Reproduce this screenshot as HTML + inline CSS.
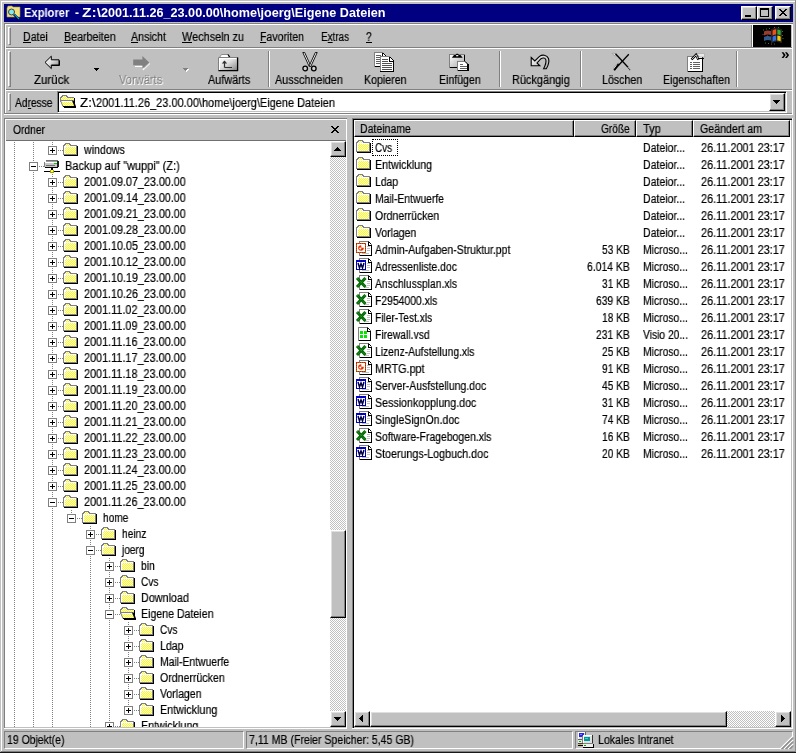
<!DOCTYPE html><html><head><meta charset="utf-8"><title>Explorer</title><style>
*{box-sizing:border-box;margin:0;padding:0}
html,body{width:796px;height:753px;overflow:hidden;background:#c0c0c0}
body{position:relative;font-family:"Liberation Sans",sans-serif;font-size:11px;color:#000;line-height:13px}
.a{position:absolute}
.t{position:absolute;white-space:nowrap;height:13px;line-height:13px;font-size:12px;transform-origin:0 0;will-change:transform;-webkit-text-stroke:0.2px currentColor}
.r{position:absolute;white-space:nowrap;height:13px;line-height:13px;text-align:right}
u{text-decoration:none;border-bottom:1px solid #000;display:inline-block;height:12px;line-height:13px}
.dis{color:#808080;text-shadow:1px 1px 0 #fff;-webkit-text-stroke:0 !important}
svg{position:absolute;overflow:visible}
.vd{position:absolute;width:1px;background:repeating-linear-gradient(to bottom,#808080 0,#808080 1px,transparent 1px,transparent 2px)}
.hd{position:absolute;height:1px;background:repeating-linear-gradient(to right,#808080 0,#808080 1px,transparent 1px,transparent 2px)}
.bx{position:absolute;width:9px;height:9px;border:1px solid #808080;background:#fff}
.bx i{position:absolute;left:1px;top:3px;width:5px;height:1px;background:#000}
.bx b{position:absolute;left:3px;top:1px;width:1px;height:5px;background:#000}
.btn{position:absolute;background:#c0c0c0;border:1px solid;border-color:#fff #000 #000 #fff;box-shadow:inset -1px -1px 0 #808080,inset 1px 1px 0 #dfdfdf}
.sb{background-color:#fff;background-image:linear-gradient(45deg,#c0c0c0 25%,transparent 25%,transparent 75%,#c0c0c0 75%),linear-gradient(45deg,#c0c0c0 25%,transparent 25%,transparent 75%,#c0c0c0 75%);background-size:2px 2px;background-position:0 0,1px 1px}
.grip{position:absolute;width:3px;border:1px solid;border-color:#fff #808080 #808080 #fff}
.hl{position:absolute;height:2px;border-top:1px solid #808080;border-bottom:1px solid #fff}
.vsep{position:absolute;width:2px;border-left:1px solid #808080;border-right:1px solid #fff}
.hdr{position:absolute;background:#c0c0c0;border:1px solid;border-color:#fff #000 #000 #fff;box-shadow:inset -1px -1px 0 #808080}
.sunk{position:absolute;border:1px solid;border-color:#808080 #fff #fff #808080}
</style></head><body>
<svg width="0" height="0" style="left:0;top:0"><defs><pattern id="dy" width="2" height="2" patternUnits="userSpaceOnUse"><rect width="2" height="2" fill="#fff"/><rect width="1" height="1" fill="#ff0"/><rect x="1" y="1" width="1" height="1" fill="#ff0"/></pattern></defs></svg>
<div class="a" style="left:0px;top:0px;width:796px;height:753px;background:#c0c0c0;"></div>
<div class="a" style="left:1px;top:1px;width:794px;height:1px;background:#fff;"></div>
<div class="a" style="left:1px;top:1px;width:1px;height:751px;background:#fff;"></div>
<div class="a" style="left:1px;top:751px;width:795px;height:1px;background:#808080;"></div>
<div class="a" style="left:795px;top:0px;width:1px;height:753px;background:#8c8c8c;"></div>
<div class="a" style="left:0px;top:752px;width:796px;height:1px;background:#181818;"></div>
<div class="a" style="left:4px;top:4px;width:789px;height:18px;background:#000080;"></div>
<div class="t" style="left:24.30px;top:7px;transform:scaleX(0.9307);color:#fff;font-weight:bold;-webkit-text-stroke:0">Explorer</div>
<div class="t" style="left:74.50px;top:7px;transform:scaleX(0.9250);color:#fff;font-weight:bold;-webkit-text-stroke:0">-</div>
<div class="t" style="left:81.50px;top:7px;transform:scaleX(1.2964);color:#fff;font-weight:bold;-webkit-text-stroke:0">Z:\</div>
<div class="t" style="left:100.60px;top:7px;transform:scaleX(1.0528);color:#fff;font-weight:bold;-webkit-text-stroke:0">2001.11.26_23.00.00\home\joerg\Eigene Dateien</div>
<svg style="left:6px;top:5px" width="16" height="16" viewBox="0 0 16 16"><path d="M1 3l1-2h4l1 1h7v10h-13z" fill="#f0e080" stroke="#a09030" stroke-width="0.600"/><circle cx="5.500" cy="7" r="3" fill="#80e8f0" stroke="#404040" stroke-width="1"/><path d="M8 9.500l5 5" stroke="#000" stroke-width="2.400"/><path d="M8.300 9.300l4.700 4.700" stroke="#00a0e0" stroke-width="1.200"/></svg>
<div class="btn" style="left:741px;top:6px;width:16px;height:14px"></div>
<div class="btn" style="left:757px;top:6px;width:16px;height:14px"></div>
<div class="btn" style="left:775px;top:6px;width:16px;height:14px"></div>
<div class="a" style="left:745px;top:15px;width:6px;height:2px;background:#000;"></div>
<div class="a" style="left:760px;top:8px;width:9px;height:9px;border:1px solid #000;border-top-width:2px"></div>
<svg style="left:779px;top:9px" width="8" height="7" viewBox="0 0 8 7" shape-rendering="crispEdges"><path d="M0 0h2v1h1v1h2v-1h1v-1h2v1h-1v1h-1v1h-1v1h1v1h1v1h1v1h-2v-1h-1v-1h-2v1h-1v1h-2v-1h1v-1h1v-1h1v-1h-1v-1h-1v-1h-1z" fill="#000"/></svg>
<div class="hl" style="left:4px;top:23px;width:789px"></div>
<div class="hl" style="left:4px;top:47px;width:789px"></div>
<div class="hl" style="left:4px;top:89px;width:789px"></div>
<div class="hl" style="left:4px;top:113px;width:789px"></div>
<div class="a" style="left:4px;top:24px;width:1px;height:90px;background:#808080;"></div>
<div class="a" style="left:5px;top:25px;width:1px;height:88px;background:#fff;"></div>
<div class="a" style="left:792px;top:24px;width:1px;height:90px;background:#fff;"></div>
<div class="grip" style="left:8px;top:27px;height:18px"></div>
<div class="grip" style="left:8px;top:51px;height:36px"></div>
<div class="grip" style="left:8px;top:93px;height:18px"></div>
<div class="t" style="left:23.40px;top:31px;transform:scaleX(0.8852);"><u>D</u>atei</div>
<div class="t" style="left:64.00px;top:31px;transform:scaleX(0.8892);"><u>B</u>earbeiten</div>
<div class="t" style="left:130.90px;top:31px;transform:scaleX(0.8871);"><u>A</u>nsicht</div>
<div class="t" style="left:182.20px;top:31px;transform:scaleX(0.9026);"><u>W</u>echseln zu</div>
<div class="t" style="left:260.30px;top:31px;transform:scaleX(0.8797);"><u>F</u>avoriten</div>
<div class="t" style="left:320.60px;top:31px;transform:scaleX(0.8265);">E<u>x</u>tras</div>
<div class="t" style="left:365.80px;top:31px;transform:scaleX(0.8543);"><u>?</u></div>
<div class="a" style="left:751px;top:25px;width:1px;height:22px;background:#808080;"></div>
<div class="a" style="left:752px;top:25px;width:1px;height:22px;background:#fff;"></div>
<div class="a" style="left:753px;top:25px;width:38px;height:22px;background:#000;"></div>
<svg style="left:762px;top:26px" width="22" height="20" viewBox="0 0 22 20"><path d="M9.500 3.500q5-3 10 0v13q-5-3-10 0z" fill="#101010" stroke="#303030" stroke-width="0.800"/><path d="M10.500 4.500q2-1.300 3.800-1.200v5.200q-2-0.100-3.800 1.200z" fill="#f05020"/><path d="M15.300 3.400q2 0.100 3.400 1v5.200q-1.500-0.900-3.400-1z" fill="#30b030"/><path d="M10.500 10.700q2-1.300 3.800-1.200v5q-2-0.100-3.800 1.200z" fill="#3070e0"/><path d="M15.300 9.500q2 0.100 3.400 1v5q-1.500-0.900-3.400-1z" fill="#f8c800"/><path d="M2 5.500q3-1.500 7-0.500v4q-4-1-7 0.500z" fill="#b04838" opacity="0.850"/><path d="M2 11q3-1.500 7-0.500v4q-4-1-7 0.500z" fill="#3868a8" opacity="0.850"/><path d="M1 3.500h1v1h-1zM4 2.500h1v1h-1zM7 2h1v1h-1zM3 16.500h1v1h-1zM6 17h1v1h-1zM20 5h1v1h-1zM20.500 12h1v1h-1zM12 17.500h1v1h-1zM16 1h1v1h-1z" fill="#308030"/><path d="M0.500 8h1v1h-1zM5 9.500h1v1h-1zM20 9h1v1h-1zM9 17.500h1v1h-1zM12 1h1v1h-1z" fill="#a04040"/></svg>
<div class="t" style="left:34.20px;top:74px;transform:scaleX(0.9571);">Zurück</div>
<div class="t dis" style="left:119.00px;top:74px;transform:scaleX(0.9274);">Vorwärts</div>
<div class="t" style="left:207.50px;top:74px;transform:scaleX(0.9042);">Aufwärts</div>
<div class="t" style="left:275.40px;top:74px;transform:scaleX(0.8995);">Ausschneiden</div>
<div class="t" style="left:363.50px;top:74px;transform:scaleX(0.8848);">Kopieren</div>
<div class="t" style="left:438.70px;top:74px;transform:scaleX(0.8805);">Einfügen</div>
<div class="t" style="left:511.60px;top:74px;transform:scaleX(0.9120);">Rückgängig</div>
<div class="t" style="left:602.00px;top:74px;transform:scaleX(0.8863);">Löschen</div>
<div class="t" style="left:663.30px;top:74px;transform:scaleX(0.8799);">Eigenschaften</div>
<div class="vsep" style="left:268px;top:51px;height:36px"></div>
<div class="vsep" style="left:499px;top:51px;height:36px"></div>
<div class="vsep" style="left:580px;top:51px;height:36px"></div>
<div class="vsep" style="left:736px;top:51px;height:36px"></div>
<svg style="left:94px;top:68px" width="5" height="3" viewBox="0 0 5 3" shape-rendering="crispEdges"><path d="M0 0h5v1h-1v1h-1v1h-1v-1h-1v-1h-1z" fill="#000"/></svg>
<svg style="left:183px;top:68px" width="6" height="4" viewBox="0 0 6 4" shape-rendering="crispEdges"><path d="M1 1h5v1h-1v1h-1v1h-1v-1h-1v-1h-1z" fill="#fff"/><path d="M0 0h5v1h-1v1h-1v1h-1v-1h-1v-1h-1z" fill="#808080"/></svg>
<div class="t" style="left:780.50px;top:48px;transform:scaleX(1.1000);font-weight:bold;font-size:14px;-webkit-text-stroke:0">»</div>
<svg width="0" height="0" style="left:0;top:0"><defs><linearGradient id="gA" x1="0" y1="0" x2="1" y2="1"><stop offset="0" stop-color="#fff"/><stop offset="1" stop-color="#a8a8a8"/></linearGradient><linearGradient id="gB" x1="0" y1="0" x2="1" y2="1"><stop offset="0" stop-color="#fff"/><stop offset="0.450" stop-color="#e0e0e0"/><stop offset="1" stop-color="#808080"/></linearGradient></defs></svg>
<svg style="left:44px;top:55px" width="17" height="15" viewBox="0 0 17 15"><path d="M1 7.400l6.300-6.200v3.600h7.700v5.200h-7.700v3.600z" fill="url(#gB)" stroke="#000" stroke-width="1" stroke-linejoin="miter"/><path d="M7.800 10.500h7.700v-5" fill="none" stroke="#000" stroke-width="1"/></svg>
<svg style="left:132px;top:55px" width="19" height="16" viewBox="0 0 19 16"><path d="M18 8.500l-6.800 6.500v-3.500h-8.200" fill="none" stroke="#fff" stroke-width="1"/><path d="M17.200 7.500l-6.800-6.500v3.600h-9.200v5.600h9.200v3.600z" fill="#808080" stroke="none"/></svg>
<svg style="left:218px;top:53px" width="21" height="19" viewBox="0 0 21 19"><path d="M1.500 4.500L3.500 1.500H10L11.500 4.500z" fill="#fff" stroke="#808080" stroke-width="0.900"/><path d="M10 1.500L11.800 4.300" stroke="#000" stroke-width="1.200" fill="none"/><path d="M0.500 4.500h19v13h-19z" fill="url(#gB)" stroke="#808080" stroke-width="1"/><path d="M1.500 17v-11.500h17" fill="none" stroke="#fff" stroke-width="1"/><path d="M19.600 4.500v13.500M0.500 17.600h19.600" fill="none" stroke="#000" stroke-width="1.300"/><path d="M6.500 14.500V8M6.500 14.500H14" stroke="#303030" stroke-width="1.200" fill="none"/><path d="M3.800 10.500L6.500 7.500L9.200 10.500z" fill="#303030"/></svg>
<svg style="left:301px;top:52px" width="18" height="21" viewBox="0 0 18 21"><path d="M1.800 0.500l1.900 0l6 13.300l-1.500 0.700z" fill="#fff" stroke="#000" stroke-width="0.900"/><path d="M16.200 0.500l-1.900 0l-6 13.300l1.500 0.700z" fill="#fff" stroke="#000" stroke-width="0.900"/><circle cx="4.200" cy="16.500" r="2.300" fill="#d0d0d0" stroke="#000" stroke-width="1.300"/><circle cx="12.800" cy="16.500" r="2.300" fill="#d0d0d0" stroke="#000" stroke-width="1.300"/></svg>
<svg style="left:374px;top:52px" width="21" height="20" viewBox="0 0 21 20" shape-rendering="crispEdges"><path d="M0.500 0.500h8l3 3v11h-11z" fill="#fff" stroke="#000"/><path d="M0.500 15v-14.500h8" fill="none" stroke="#808080"/><path d="M8.500 1v3h3" fill="none" stroke="#000"/><path d="M2 3.500h5M2 5.500h4M2 7.500h4M2 9.500h4M2 11.500h4" stroke="#606060" fill="none"/><path d="M6.500 4.500h9l4 4v11h-13z" fill="#fff" stroke="#000"/><path d="M6.500 19v-14.500h9" fill="none" stroke="#808080"/><path d="M15.500 5v4h4" fill="none" stroke="#000"/><path d="M8 7.500h6M8 9.500h6M8 11.500h10M8 13.500h10M8 15.500h10M8 17.500h10" stroke="#505050" fill="none"/></svg>
<svg style="left:449px;top:53px" width="21" height="19" viewBox="0 0 21 19" shape-rendering="crispEdges"><path d="M0.500 1.500h15v13h-15z" fill="url(#gA)" stroke="#808080"/><path d="M15.500 2v13M1 14.500h15" fill="none" stroke="#000" stroke-width="1.400"/><path d="M2.800 4.700l2.200-2.700h1.500l1-1.300h1.500l1 1.300h1.500l2.200 2.700z" fill="#000" shape-rendering="auto"/><ellipse cx="8.200" cy="2.700" rx="1.300" ry="0.600" fill="#fff" shape-rendering="auto"/><path d="M8.500 8.500h8l2 2v7h-10z" fill="#fff" stroke="#808080"/><path d="M19 10.500v7.500M9 17.500h10.500" fill="none" stroke="#000" stroke-width="1.400"/><path d="M16 8.500l3 3" stroke="#000" fill="none" shape-rendering="auto"/><path d="M10.500 11.500h3M10.500 13.500h7M10.500 15.500h7" stroke="#606060" fill="none"/></svg>
<svg style="left:530px;top:54px" width="21" height="17" viewBox="0 0 21 17"><path d="M1.200 3.500L4.800 7L9.500 2.400C12 0.500 17 0.500 18.500 4.500C19.500 8 18 12 16.300 14.700L13.600 14.700C15.500 11 16.500 8 15.800 5.600C15 3.600 12.500 3.800 11 4.700L7 9L9.800 11.800L1.200 11.800z" fill="url(#gA)" stroke="#000" stroke-width="1.100" stroke-linejoin="miter"/></svg>
<svg style="left:611px;top:52px" width="20" height="20" viewBox="0 0 20 20"><path d="M1.200 1.500c1.500-0.800 3.500 0 5 2.500c-2 0-4-1-5-2.500z" fill="#f0f0f0" stroke="#808080" stroke-width="0.600"/><path d="M2.800 17.500c-0.500-2 1.500-4.500 5-6.500c-1 2.500-3 5-5 6.500z" fill="#f8f8f8" stroke="#808080" stroke-width="0.600"/><path d="M4.500 1.800L17 15.200" stroke="#000" stroke-width="1.300" fill="none"/><path d="M17.800 2.200L3 18.300" stroke="#000" stroke-width="1.300" fill="none"/><path d="M3.500 18l4-6" stroke="#000" stroke-width="1.600" fill="none"/><rect x="17.200" y="15.800" width="1" height="1" fill="#000"/><rect x="18.200" y="17.200" width="1" height="1" fill="#000"/></svg>
<svg style="left:686px;top:52px" width="20" height="21" viewBox="0 0 20 21" shape-rendering="crispEdges"><path d="M1.500 4.500h15v15h-15z" fill="#fff" stroke="#808080"/><path d="M16.500 5v15M2 19.500h15" fill="none" stroke="#000" stroke-width="1.500"/><path d="M4 10.500h2M7 10.500h7M4 12.500h2M7 12.500h7M4 14.500h2M7 14.500h7M4 16.500h2M7 16.500h7" stroke="#606060" fill="none"/><path d="M11 1.500h7.500v3.500h-5z" fill="#e8e8e8" stroke="#a0a0a0" stroke-width="0.600" shape-rendering="auto"/><path d="M5.500 7.500l4.500-4.700l2.500 5" fill="none" stroke="#000" stroke-width="2.400" shape-rendering="auto"/><path d="M6 7l4-4.200l2.200 4.500" fill="none" stroke="#fff" stroke-width="0.800" shape-rendering="auto"/><path d="M12 6.500h6" stroke="#000" stroke-width="1.200" fill="none"/></svg>
<div class="t" style="left:15.00px;top:97px;transform:scaleX(0.8520);">Ad<u>r</u>esse</div>
<div class="a" style="left:57px;top:91px;width:730px;height:22px;background:#fff;border:1px solid;border-color:#808080 #fff #fff #808080;box-shadow:inset 1px 1px 0 #000,inset -1px -1px 0 #c0c0c0"></div>
<svg style="left:60px;top:94px" width="16" height="16" viewBox="0 0 16 16" shape-rendering="crispEdges"><path d="M1 3h1v-1h5v1h1v1h6v6h-13z" fill="url(#dy)"/><path d="M0.5 8V3.500H1.500V2.500H2.500V1.500H6.500V2.500H7.500V3.500H13.500" fill="none" stroke="#808080"/><path d="M14.500 4v7" fill="none" stroke="#000"/><path d="M0.500 6.500H13L15.500 12.500H3z" fill="url(#dy)" shape-rendering="auto"/><path d="M0 6.500h13" fill="none" stroke="#808080"/><path d="M1 7.500h12" fill="none" stroke="#fff"/><path d="M0.500 6.500L3 12.500" fill="none" stroke="#808080" shape-rendering="auto"/><path d="M12.800 6.500L15.300 12.800" fill="none" stroke="#000" stroke-width="1.600" shape-rendering="auto"/><path d="M3 12.500h13M4 13.500h12" fill="none" stroke="#000"/></svg>
<div class="t" style="left:79.80px;top:97px;transform:scaleX(1.1155);">Z:\</div>
<div class="t" style="left:96.20px;top:97px;transform:scaleX(0.9141);">2001.11.26_23.00.00\home\joerg\Eigene Dateien</div>
<div class="btn" style="left:769px;top:93px;width:16px;height:18px"></div>
<svg style="left:773px;top:100px" width="7" height="4" viewBox="0 0 7 4" shape-rendering="crispEdges"><path d="M0 0h7v1h-1v1h-1v1h-1v1h-1v-1h-1v-1h-1v-1h-1z" fill="#000"/></svg>
<div class="a" style="left:4px;top:118px;width:343px;height:1px;background:#808080;"></div>
<div class="a" style="left:4px;top:118px;width:1px;height:610px;background:#808080;"></div>
<div class="a" style="left:5px;top:119px;width:341px;height:1px;background:#fff;"></div>
<div class="a" style="left:346px;top:119px;width:1px;height:609px;background:#fff;"></div>
<div class="t" style="left:13.00px;top:124px;transform:scaleX(0.8569);">Ordner</div>
<svg style="left:331px;top:126px" width="8" height="7" viewBox="0 0 8 7" shape-rendering="crispEdges"><path d="M0 0h2v1h1v1h2v-1h1v-1h2v1h-1v1h-1v1h-1v1h1v1h1v1h1v1h-2v-1h-1v-1h-2v1h-1v1h-2v-1h1v-1h1v-1h1v-1h-1v-1h-1v-1h-1z" fill="#000"/></svg>
<div class="a" style="left:6px;top:140px;width:340px;height:1px;background:#707070;"></div>
<div class="a" style="left:5px;top:141px;width:325px;height:586px;background:#fff;"></div>
<div class="a" style="left:5px;top:120px;width:1px;height:21px;background:#fff;"></div>
<div class="a" style="left:4px;top:728px;width:343px;height:1px;background:#fff;"></div>
<div class="a sb" style="left:330px;top:141px;width:16px;height:586px"></div>
<div class="btn" style="left:330px;top:141px;width:16px;height:16px"></div>
<svg style="left:334px;top:147px" width="7" height="4" viewBox="0 0 7 4" shape-rendering="crispEdges"><path d="M3 0h1v1h1v1h1v1h1v1h-7v-1h1v-1h1v-1h1z" fill="#000"/></svg>
<div class="btn" style="left:330px;top:711px;width:16px;height:16px"></div>
<svg style="left:334px;top:717px" width="7" height="4" viewBox="0 0 7 4" shape-rendering="crispEdges"><path d="M0 0h7v1h-1v1h-1v1h-1v1h-1v-1h-1v-1h-1v-1h-1z" fill="#000"/></svg>
<div class="btn" style="left:330px;top:530px;width:16px;height:88px"></div>
<div class="a" style="left:6px;top:142px;width:324px;height:585px;overflow:hidden">
<div class="vd" style="left:8px;top:0px;height:585px"></div>
<div class="vd" style="left:27px;top:0px;height:585px"></div>
<div class="vd" style="left:46px;top:0px;height:8px"></div>
<div class="vd" style="left:46px;top:32px;height:553px"></div>
<div class="vd" style="left:65px;top:368px;height:8px"></div>
<div class="vd" style="left:84px;top:384px;height:201px"></div>
<div class="vd" style="left:103px;top:416px;height:169px"></div>
<div class="vd" style="left:122px;top:480px;height:88px"></div>
<div class="hd" style="left:52px;top:8px;width:5px"></div>
<div class="bx" style="left:42px;top:4px"><i></i><b></b></div>
<svg style="left:57px;top:0px" width="16" height="16" viewBox="0 0 16 16" shape-rendering="crispEdges"><path d="M1 3h1v-1h5v1h1v1h5v8h-12z" fill="url(#dy)"/><path d="M0.5 13V3.500H1.500V2.500H2.500V1.500H6.500V2.500H7.500V3.500H13.500V12.500H1" fill="none" stroke="#808080"/><path d="M14.500 4v9.500M1 13.500h14" fill="none" stroke="#000"/><path d="M1.500 12V4.500H13" fill="none" stroke="#fff"/></svg>
<div class="t" style="left:77.70px;top:2px;transform:scaleX(0.8864);">windows</div>
<div class="hd" style="left:33px;top:24px;width:5px"></div>
<div class="bx" style="left:23px;top:20px"><i></i></div>
<svg style="left:38px;top:16px" width="16" height="16" viewBox="0 0 16 16" shape-rendering="crispEdges"><path d="M2 2h12v1h1v6h-14v-5h1z" fill="#c8c8c8"/><path d="M2 2.500h12" stroke="#707070" fill="none"/><path d="M1.500 3.500h12" stroke="#a0a0a0" fill="none"/><path d="M1 4.500h12" stroke="#fff" fill="none"/><path d="M0.500 4v5" stroke="#808080" fill="none"/><path d="M2 7.500h9" stroke="#707070" fill="none"/><path d="M13 3h2v6h-2z" fill="#202020"/><path d="M1 9.500h13" stroke="#000" fill="none"/><rect x="10" y="5" width="3" height="1" fill="#00d000"/><path d="M7 10h2v2h-2z" fill="#000"/><path d="M0 13.500h16" stroke="#000" fill="none"/><rect x="6" y="12" width="4" height="3" fill="#a0a000"/><rect x="7" y="12" width="2" height="2" fill="#ffff40"/></svg>
<div class="t" style="left:58.70px;top:18px;transform:scaleX(0.9160);">Backup auf "wuppi" (Z:)</div>
<div class="hd" style="left:52px;top:40px;width:5px"></div>
<div class="bx" style="left:42px;top:36px"><i></i><b></b></div>
<svg style="left:57px;top:32px" width="16" height="16" viewBox="0 0 16 16" shape-rendering="crispEdges"><path d="M1 3h1v-1h5v1h1v1h5v8h-12z" fill="url(#dy)"/><path d="M0.5 13V3.500H1.500V2.500H2.500V1.500H6.500V2.500H7.500V3.500H13.500V12.500H1" fill="none" stroke="#808080"/><path d="M14.500 4v9.500M1 13.500h14" fill="none" stroke="#000"/><path d="M1.500 12V4.500H13" fill="none" stroke="#fff"/></svg>
<div class="t" style="left:77.70px;top:34px;transform:scaleX(0.8969);">2001.09.07_23.00.00</div>
<div class="hd" style="left:52px;top:56px;width:5px"></div>
<div class="bx" style="left:42px;top:52px"><i></i><b></b></div>
<svg style="left:57px;top:48px" width="16" height="16" viewBox="0 0 16 16" shape-rendering="crispEdges"><path d="M1 3h1v-1h5v1h1v1h5v8h-12z" fill="url(#dy)"/><path d="M0.5 13V3.500H1.500V2.500H2.500V1.500H6.500V2.500H7.500V3.500H13.500V12.500H1" fill="none" stroke="#808080"/><path d="M14.500 4v9.500M1 13.500h14" fill="none" stroke="#000"/><path d="M1.500 12V4.500H13" fill="none" stroke="#fff"/></svg>
<div class="t" style="left:77.70px;top:50px;transform:scaleX(0.8969);">2001.09.14_23.00.00</div>
<div class="hd" style="left:52px;top:72px;width:5px"></div>
<div class="bx" style="left:42px;top:68px"><i></i><b></b></div>
<svg style="left:57px;top:64px" width="16" height="16" viewBox="0 0 16 16" shape-rendering="crispEdges"><path d="M1 3h1v-1h5v1h1v1h5v8h-12z" fill="url(#dy)"/><path d="M0.5 13V3.500H1.500V2.500H2.500V1.500H6.500V2.500H7.500V3.500H13.500V12.500H1" fill="none" stroke="#808080"/><path d="M14.500 4v9.500M1 13.500h14" fill="none" stroke="#000"/><path d="M1.500 12V4.500H13" fill="none" stroke="#fff"/></svg>
<div class="t" style="left:77.70px;top:66px;transform:scaleX(0.8969);">2001.09.21_23.00.00</div>
<div class="hd" style="left:52px;top:88px;width:5px"></div>
<div class="bx" style="left:42px;top:84px"><i></i><b></b></div>
<svg style="left:57px;top:80px" width="16" height="16" viewBox="0 0 16 16" shape-rendering="crispEdges"><path d="M1 3h1v-1h5v1h1v1h5v8h-12z" fill="url(#dy)"/><path d="M0.5 13V3.500H1.500V2.500H2.500V1.500H6.500V2.500H7.500V3.500H13.500V12.500H1" fill="none" stroke="#808080"/><path d="M14.500 4v9.500M1 13.500h14" fill="none" stroke="#000"/><path d="M1.500 12V4.500H13" fill="none" stroke="#fff"/></svg>
<div class="t" style="left:77.70px;top:82px;transform:scaleX(0.8969);">2001.09.28_23.00.00</div>
<div class="hd" style="left:52px;top:104px;width:5px"></div>
<div class="bx" style="left:42px;top:100px"><i></i><b></b></div>
<svg style="left:57px;top:96px" width="16" height="16" viewBox="0 0 16 16" shape-rendering="crispEdges"><path d="M1 3h1v-1h5v1h1v1h5v8h-12z" fill="url(#dy)"/><path d="M0.5 13V3.500H1.500V2.500H2.500V1.500H6.500V2.500H7.500V3.500H13.500V12.500H1" fill="none" stroke="#808080"/><path d="M14.500 4v9.500M1 13.500h14" fill="none" stroke="#000"/><path d="M1.500 12V4.500H13" fill="none" stroke="#fff"/></svg>
<div class="t" style="left:77.70px;top:98px;transform:scaleX(0.8969);">2001.10.05_23.00.00</div>
<div class="hd" style="left:52px;top:120px;width:5px"></div>
<div class="bx" style="left:42px;top:116px"><i></i><b></b></div>
<svg style="left:57px;top:112px" width="16" height="16" viewBox="0 0 16 16" shape-rendering="crispEdges"><path d="M1 3h1v-1h5v1h1v1h5v8h-12z" fill="url(#dy)"/><path d="M0.5 13V3.500H1.500V2.500H2.500V1.500H6.500V2.500H7.500V3.500H13.500V12.500H1" fill="none" stroke="#808080"/><path d="M14.500 4v9.500M1 13.500h14" fill="none" stroke="#000"/><path d="M1.500 12V4.500H13" fill="none" stroke="#fff"/></svg>
<div class="t" style="left:77.70px;top:114px;transform:scaleX(0.8969);">2001.10.12_23.00.00</div>
<div class="hd" style="left:52px;top:136px;width:5px"></div>
<div class="bx" style="left:42px;top:132px"><i></i><b></b></div>
<svg style="left:57px;top:128px" width="16" height="16" viewBox="0 0 16 16" shape-rendering="crispEdges"><path d="M1 3h1v-1h5v1h1v1h5v8h-12z" fill="url(#dy)"/><path d="M0.5 13V3.500H1.500V2.500H2.500V1.500H6.500V2.500H7.500V3.500H13.500V12.500H1" fill="none" stroke="#808080"/><path d="M14.500 4v9.500M1 13.500h14" fill="none" stroke="#000"/><path d="M1.500 12V4.500H13" fill="none" stroke="#fff"/></svg>
<div class="t" style="left:77.70px;top:130px;transform:scaleX(0.8969);">2001.10.19_23.00.00</div>
<div class="hd" style="left:52px;top:152px;width:5px"></div>
<div class="bx" style="left:42px;top:148px"><i></i><b></b></div>
<svg style="left:57px;top:144px" width="16" height="16" viewBox="0 0 16 16" shape-rendering="crispEdges"><path d="M1 3h1v-1h5v1h1v1h5v8h-12z" fill="url(#dy)"/><path d="M0.5 13V3.500H1.500V2.500H2.500V1.500H6.500V2.500H7.500V3.500H13.500V12.500H1" fill="none" stroke="#808080"/><path d="M14.500 4v9.500M1 13.500h14" fill="none" stroke="#000"/><path d="M1.500 12V4.500H13" fill="none" stroke="#fff"/></svg>
<div class="t" style="left:77.70px;top:146px;transform:scaleX(0.8969);">2001.10.26_23.00.00</div>
<div class="hd" style="left:52px;top:168px;width:5px"></div>
<div class="bx" style="left:42px;top:164px"><i></i><b></b></div>
<svg style="left:57px;top:160px" width="16" height="16" viewBox="0 0 16 16" shape-rendering="crispEdges"><path d="M1 3h1v-1h5v1h1v1h5v8h-12z" fill="url(#dy)"/><path d="M0.5 13V3.500H1.500V2.500H2.500V1.500H6.500V2.500H7.500V3.500H13.500V12.500H1" fill="none" stroke="#808080"/><path d="M14.500 4v9.500M1 13.500h14" fill="none" stroke="#000"/><path d="M1.500 12V4.500H13" fill="none" stroke="#fff"/></svg>
<div class="t" style="left:77.70px;top:162px;transform:scaleX(0.9040);">2001.11.02_23.00.00</div>
<div class="hd" style="left:52px;top:184px;width:5px"></div>
<div class="bx" style="left:42px;top:180px"><i></i><b></b></div>
<svg style="left:57px;top:176px" width="16" height="16" viewBox="0 0 16 16" shape-rendering="crispEdges"><path d="M1 3h1v-1h5v1h1v1h5v8h-12z" fill="url(#dy)"/><path d="M0.5 13V3.500H1.500V2.500H2.500V1.500H6.500V2.500H7.500V3.500H13.500V12.500H1" fill="none" stroke="#808080"/><path d="M14.500 4v9.500M1 13.500h14" fill="none" stroke="#000"/><path d="M1.500 12V4.500H13" fill="none" stroke="#fff"/></svg>
<div class="t" style="left:77.70px;top:178px;transform:scaleX(0.9040);">2001.11.09_23.00.00</div>
<div class="hd" style="left:52px;top:200px;width:5px"></div>
<div class="bx" style="left:42px;top:196px"><i></i><b></b></div>
<svg style="left:57px;top:192px" width="16" height="16" viewBox="0 0 16 16" shape-rendering="crispEdges"><path d="M1 3h1v-1h5v1h1v1h5v8h-12z" fill="url(#dy)"/><path d="M0.5 13V3.500H1.500V2.500H2.500V1.500H6.500V2.500H7.500V3.500H13.500V12.500H1" fill="none" stroke="#808080"/><path d="M14.500 4v9.500M1 13.500h14" fill="none" stroke="#000"/><path d="M1.500 12V4.500H13" fill="none" stroke="#fff"/></svg>
<div class="t" style="left:77.70px;top:194px;transform:scaleX(0.9040);">2001.11.16_23.00.00</div>
<div class="hd" style="left:52px;top:216px;width:5px"></div>
<div class="bx" style="left:42px;top:212px"><i></i><b></b></div>
<svg style="left:57px;top:208px" width="16" height="16" viewBox="0 0 16 16" shape-rendering="crispEdges"><path d="M1 3h1v-1h5v1h1v1h5v8h-12z" fill="url(#dy)"/><path d="M0.5 13V3.500H1.500V2.500H2.500V1.500H6.500V2.500H7.500V3.500H13.500V12.500H1" fill="none" stroke="#808080"/><path d="M14.500 4v9.500M1 13.500h14" fill="none" stroke="#000"/><path d="M1.500 12V4.500H13" fill="none" stroke="#fff"/></svg>
<div class="t" style="left:77.70px;top:210px;transform:scaleX(0.9040);">2001.11.17_23.00.00</div>
<div class="hd" style="left:52px;top:232px;width:5px"></div>
<div class="bx" style="left:42px;top:228px"><i></i><b></b></div>
<svg style="left:57px;top:224px" width="16" height="16" viewBox="0 0 16 16" shape-rendering="crispEdges"><path d="M1 3h1v-1h5v1h1v1h5v8h-12z" fill="url(#dy)"/><path d="M0.5 13V3.500H1.500V2.500H2.500V1.500H6.500V2.500H7.500V3.500H13.500V12.500H1" fill="none" stroke="#808080"/><path d="M14.500 4v9.500M1 13.500h14" fill="none" stroke="#000"/><path d="M1.500 12V4.500H13" fill="none" stroke="#fff"/></svg>
<div class="t" style="left:77.70px;top:226px;transform:scaleX(0.9040);">2001.11.18_23.00.00</div>
<div class="hd" style="left:52px;top:248px;width:5px"></div>
<div class="bx" style="left:42px;top:244px"><i></i><b></b></div>
<svg style="left:57px;top:240px" width="16" height="16" viewBox="0 0 16 16" shape-rendering="crispEdges"><path d="M1 3h1v-1h5v1h1v1h5v8h-12z" fill="url(#dy)"/><path d="M0.5 13V3.500H1.500V2.500H2.500V1.500H6.500V2.500H7.500V3.500H13.500V12.500H1" fill="none" stroke="#808080"/><path d="M14.500 4v9.500M1 13.500h14" fill="none" stroke="#000"/><path d="M1.500 12V4.500H13" fill="none" stroke="#fff"/></svg>
<div class="t" style="left:77.70px;top:242px;transform:scaleX(0.9040);">2001.11.19_23.00.00</div>
<div class="hd" style="left:52px;top:264px;width:5px"></div>
<div class="bx" style="left:42px;top:260px"><i></i><b></b></div>
<svg style="left:57px;top:256px" width="16" height="16" viewBox="0 0 16 16" shape-rendering="crispEdges"><path d="M1 3h1v-1h5v1h1v1h5v8h-12z" fill="url(#dy)"/><path d="M0.5 13V3.500H1.500V2.500H2.500V1.500H6.500V2.500H7.500V3.500H13.500V12.500H1" fill="none" stroke="#808080"/><path d="M14.500 4v9.500M1 13.500h14" fill="none" stroke="#000"/><path d="M1.500 12V4.500H13" fill="none" stroke="#fff"/></svg>
<div class="t" style="left:77.70px;top:258px;transform:scaleX(0.9040);">2001.11.20_23.00.00</div>
<div class="hd" style="left:52px;top:280px;width:5px"></div>
<div class="bx" style="left:42px;top:276px"><i></i><b></b></div>
<svg style="left:57px;top:272px" width="16" height="16" viewBox="0 0 16 16" shape-rendering="crispEdges"><path d="M1 3h1v-1h5v1h1v1h5v8h-12z" fill="url(#dy)"/><path d="M0.5 13V3.500H1.500V2.500H2.500V1.500H6.500V2.500H7.500V3.500H13.500V12.500H1" fill="none" stroke="#808080"/><path d="M14.500 4v9.500M1 13.500h14" fill="none" stroke="#000"/><path d="M1.500 12V4.500H13" fill="none" stroke="#fff"/></svg>
<div class="t" style="left:77.70px;top:274px;transform:scaleX(0.9040);">2001.11.21_23.00.00</div>
<div class="hd" style="left:52px;top:296px;width:5px"></div>
<div class="bx" style="left:42px;top:292px"><i></i><b></b></div>
<svg style="left:57px;top:288px" width="16" height="16" viewBox="0 0 16 16" shape-rendering="crispEdges"><path d="M1 3h1v-1h5v1h1v1h5v8h-12z" fill="url(#dy)"/><path d="M0.5 13V3.500H1.500V2.500H2.500V1.500H6.500V2.500H7.500V3.500H13.500V12.500H1" fill="none" stroke="#808080"/><path d="M14.500 4v9.500M1 13.500h14" fill="none" stroke="#000"/><path d="M1.500 12V4.500H13" fill="none" stroke="#fff"/></svg>
<div class="t" style="left:77.70px;top:290px;transform:scaleX(0.9040);">2001.11.22_23.00.00</div>
<div class="hd" style="left:52px;top:312px;width:5px"></div>
<div class="bx" style="left:42px;top:308px"><i></i><b></b></div>
<svg style="left:57px;top:304px" width="16" height="16" viewBox="0 0 16 16" shape-rendering="crispEdges"><path d="M1 3h1v-1h5v1h1v1h5v8h-12z" fill="url(#dy)"/><path d="M0.5 13V3.500H1.500V2.500H2.500V1.500H6.500V2.500H7.500V3.500H13.500V12.500H1" fill="none" stroke="#808080"/><path d="M14.500 4v9.500M1 13.500h14" fill="none" stroke="#000"/><path d="M1.500 12V4.500H13" fill="none" stroke="#fff"/></svg>
<div class="t" style="left:77.70px;top:306px;transform:scaleX(0.9040);">2001.11.23_23.00.00</div>
<div class="hd" style="left:52px;top:328px;width:5px"></div>
<div class="bx" style="left:42px;top:324px"><i></i><b></b></div>
<svg style="left:57px;top:320px" width="16" height="16" viewBox="0 0 16 16" shape-rendering="crispEdges"><path d="M1 3h1v-1h5v1h1v1h5v8h-12z" fill="url(#dy)"/><path d="M0.5 13V3.500H1.500V2.500H2.500V1.500H6.500V2.500H7.500V3.500H13.500V12.500H1" fill="none" stroke="#808080"/><path d="M14.500 4v9.500M1 13.500h14" fill="none" stroke="#000"/><path d="M1.500 12V4.500H13" fill="none" stroke="#fff"/></svg>
<div class="t" style="left:77.70px;top:322px;transform:scaleX(0.9040);">2001.11.24_23.00.00</div>
<div class="hd" style="left:52px;top:344px;width:5px"></div>
<div class="bx" style="left:42px;top:340px"><i></i><b></b></div>
<svg style="left:57px;top:336px" width="16" height="16" viewBox="0 0 16 16" shape-rendering="crispEdges"><path d="M1 3h1v-1h5v1h1v1h5v8h-12z" fill="url(#dy)"/><path d="M0.5 13V3.500H1.500V2.500H2.500V1.500H6.500V2.500H7.500V3.500H13.500V12.500H1" fill="none" stroke="#808080"/><path d="M14.500 4v9.500M1 13.500h14" fill="none" stroke="#000"/><path d="M1.500 12V4.500H13" fill="none" stroke="#fff"/></svg>
<div class="t" style="left:77.70px;top:338px;transform:scaleX(0.9040);">2001.11.25_23.00.00</div>
<div class="hd" style="left:52px;top:360px;width:5px"></div>
<div class="bx" style="left:42px;top:356px"><i></i></div>
<svg style="left:57px;top:352px" width="16" height="16" viewBox="0 0 16 16" shape-rendering="crispEdges"><path d="M1 3h1v-1h5v1h1v1h5v8h-12z" fill="url(#dy)"/><path d="M0.5 13V3.500H1.500V2.500H2.500V1.500H6.500V2.500H7.500V3.500H13.500V12.500H1" fill="none" stroke="#808080"/><path d="M14.500 4v9.500M1 13.500h14" fill="none" stroke="#000"/><path d="M1.500 12V4.500H13" fill="none" stroke="#fff"/></svg>
<div class="t" style="left:77.70px;top:354px;transform:scaleX(0.9040);">2001.11.26_23.00.00</div>
<div class="hd" style="left:71px;top:376px;width:5px"></div>
<div class="bx" style="left:61px;top:372px"><i></i></div>
<svg style="left:76px;top:368px" width="16" height="16" viewBox="0 0 16 16" shape-rendering="crispEdges"><path d="M1 3h1v-1h5v1h1v1h5v8h-12z" fill="url(#dy)"/><path d="M0.5 13V3.500H1.500V2.500H2.500V1.500H6.500V2.500H7.500V3.500H13.500V12.500H1" fill="none" stroke="#808080"/><path d="M14.500 4v9.500M1 13.500h14" fill="none" stroke="#000"/><path d="M1.500 12V4.500H13" fill="none" stroke="#fff"/></svg>
<div class="t" style="left:96.70px;top:370px;transform:scaleX(0.8462);">home</div>
<div class="hd" style="left:90px;top:392px;width:5px"></div>
<div class="bx" style="left:80px;top:388px"><i></i><b></b></div>
<svg style="left:95px;top:384px" width="16" height="16" viewBox="0 0 16 16" shape-rendering="crispEdges"><path d="M1 3h1v-1h5v1h1v1h5v8h-12z" fill="url(#dy)"/><path d="M0.5 13V3.500H1.500V2.500H2.500V1.500H6.500V2.500H7.500V3.500H13.500V12.500H1" fill="none" stroke="#808080"/><path d="M14.500 4v9.500M1 13.500h14" fill="none" stroke="#000"/><path d="M1.500 12V4.500H13" fill="none" stroke="#fff"/></svg>
<div class="t" style="left:115.70px;top:386px;transform:scaleX(0.8471);">heinz</div>
<div class="hd" style="left:90px;top:408px;width:5px"></div>
<div class="bx" style="left:80px;top:404px"><i></i></div>
<svg style="left:95px;top:400px" width="16" height="16" viewBox="0 0 16 16" shape-rendering="crispEdges"><path d="M1 3h1v-1h5v1h1v1h5v8h-12z" fill="url(#dy)"/><path d="M0.5 13V3.500H1.500V2.500H2.500V1.500H6.500V2.500H7.500V3.500H13.500V12.500H1" fill="none" stroke="#808080"/><path d="M14.500 4v9.500M1 13.500h14" fill="none" stroke="#000"/><path d="M1.500 12V4.500H13" fill="none" stroke="#fff"/></svg>
<div class="t" style="left:115.70px;top:402px;transform:scaleX(0.8431);">joerg</div>
<div class="hd" style="left:109px;top:424px;width:5px"></div>
<div class="bx" style="left:99px;top:420px"><i></i><b></b></div>
<svg style="left:114px;top:416px" width="16" height="16" viewBox="0 0 16 16" shape-rendering="crispEdges"><path d="M1 3h1v-1h5v1h1v1h5v8h-12z" fill="url(#dy)"/><path d="M0.5 13V3.500H1.500V2.500H2.500V1.500H6.500V2.500H7.500V3.500H13.500V12.500H1" fill="none" stroke="#808080"/><path d="M14.500 4v9.500M1 13.500h14" fill="none" stroke="#000"/><path d="M1.500 12V4.500H13" fill="none" stroke="#fff"/></svg>
<div class="t" style="left:134.70px;top:418px;transform:scaleX(0.8617);">bin</div>
<div class="hd" style="left:109px;top:440px;width:5px"></div>
<div class="bx" style="left:99px;top:436px"><i></i><b></b></div>
<svg style="left:114px;top:432px" width="16" height="16" viewBox="0 0 16 16" shape-rendering="crispEdges"><path d="M1 3h1v-1h5v1h1v1h5v8h-12z" fill="url(#dy)"/><path d="M0.5 13V3.500H1.500V2.500H2.500V1.500H6.500V2.500H7.500V3.500H13.500V12.500H1" fill="none" stroke="#808080"/><path d="M14.500 4v9.500M1 13.500h14" fill="none" stroke="#000"/><path d="M1.500 12V4.500H13" fill="none" stroke="#fff"/></svg>
<div class="t" style="left:134.70px;top:434px;transform:scaleX(0.8369);">Cvs</div>
<div class="hd" style="left:109px;top:456px;width:5px"></div>
<div class="bx" style="left:99px;top:452px"><i></i><b></b></div>
<svg style="left:114px;top:448px" width="16" height="16" viewBox="0 0 16 16" shape-rendering="crispEdges"><path d="M1 3h1v-1h5v1h1v1h5v8h-12z" fill="url(#dy)"/><path d="M0.5 13V3.500H1.500V2.500H2.500V1.500H6.500V2.500H7.500V3.500H13.500V12.500H1" fill="none" stroke="#808080"/><path d="M14.500 4v9.500M1 13.500h14" fill="none" stroke="#000"/><path d="M1.500 12V4.500H13" fill="none" stroke="#fff"/></svg>
<div class="t" style="left:134.70px;top:450px;transform:scaleX(0.8974);">Download</div>
<div class="hd" style="left:109px;top:472px;width:5px"></div>
<div class="bx" style="left:99px;top:468px"><i></i></div>
<svg style="left:114px;top:464px" width="16" height="16" viewBox="0 0 16 16" shape-rendering="crispEdges"><path d="M1 3h1v-1h5v1h1v1h6v6h-13z" fill="url(#dy)"/><path d="M0.5 8V3.500H1.500V2.500H2.500V1.500H6.500V2.500H7.500V3.500H13.500" fill="none" stroke="#808080"/><path d="M14.500 4v7" fill="none" stroke="#000"/><path d="M0.500 6.500H13L15.500 12.500H3z" fill="url(#dy)" shape-rendering="auto"/><path d="M0 6.500h13" fill="none" stroke="#808080"/><path d="M1 7.500h12" fill="none" stroke="#fff"/><path d="M0.500 6.500L3 12.500" fill="none" stroke="#808080" shape-rendering="auto"/><path d="M12.800 6.500L15.300 12.800" fill="none" stroke="#000" stroke-width="1.600" shape-rendering="auto"/><path d="M3 12.500h13M4 13.500h12" fill="none" stroke="#000"/></svg>
<div class="t" style="left:134.70px;top:466px;transform:scaleX(0.8836);">Eigene Dateien</div>
<div class="hd" style="left:128px;top:488px;width:5px"></div>
<div class="bx" style="left:118px;top:484px"><i></i><b></b></div>
<svg style="left:133px;top:480px" width="16" height="16" viewBox="0 0 16 16" shape-rendering="crispEdges"><path d="M1 3h1v-1h5v1h1v1h5v8h-12z" fill="url(#dy)"/><path d="M0.5 13V3.500H1.500V2.500H2.500V1.500H6.500V2.500H7.500V3.500H13.500V12.500H1" fill="none" stroke="#808080"/><path d="M14.500 4v9.500M1 13.500h14" fill="none" stroke="#000"/><path d="M1.500 12V4.500H13" fill="none" stroke="#fff"/></svg>
<div class="t" style="left:153.70px;top:482px;transform:scaleX(0.8369);">Cvs</div>
<div class="hd" style="left:128px;top:504px;width:5px"></div>
<div class="bx" style="left:118px;top:500px"><i></i><b></b></div>
<svg style="left:133px;top:496px" width="16" height="16" viewBox="0 0 16 16" shape-rendering="crispEdges"><path d="M1 3h1v-1h5v1h1v1h5v8h-12z" fill="url(#dy)"/><path d="M0.5 13V3.500H1.500V2.500H2.500V1.500H6.500V2.500H7.500V3.500H13.500V12.500H1" fill="none" stroke="#808080"/><path d="M14.500 4v9.500M1 13.500h14" fill="none" stroke="#000"/><path d="M1.500 12V4.500H13" fill="none" stroke="#fff"/></svg>
<div class="t" style="left:153.70px;top:498px;transform:scaleX(0.8806);">Ldap</div>
<div class="hd" style="left:128px;top:520px;width:5px"></div>
<div class="bx" style="left:118px;top:516px"><i></i><b></b></div>
<svg style="left:133px;top:512px" width="16" height="16" viewBox="0 0 16 16" shape-rendering="crispEdges"><path d="M1 3h1v-1h5v1h1v1h5v8h-12z" fill="url(#dy)"/><path d="M0.5 13V3.500H1.500V2.500H2.500V1.500H6.500V2.500H7.500V3.500H13.500V12.500H1" fill="none" stroke="#808080"/><path d="M14.500 4v9.500M1 13.500h14" fill="none" stroke="#000"/><path d="M1.500 12V4.500H13" fill="none" stroke="#fff"/></svg>
<div class="t" style="left:153.70px;top:514px;transform:scaleX(0.8647);">Mail-Entwuerfe</div>
<div class="hd" style="left:128px;top:536px;width:5px"></div>
<div class="bx" style="left:118px;top:532px"><i></i><b></b></div>
<svg style="left:133px;top:528px" width="16" height="16" viewBox="0 0 16 16" shape-rendering="crispEdges"><path d="M1 3h1v-1h5v1h1v1h5v8h-12z" fill="url(#dy)"/><path d="M0.5 13V3.500H1.500V2.500H2.500V1.500H6.500V2.500H7.500V3.500H13.500V12.500H1" fill="none" stroke="#808080"/><path d="M14.500 4v9.500M1 13.500h14" fill="none" stroke="#000"/><path d="M1.500 12V4.500H13" fill="none" stroke="#fff"/></svg>
<div class="t" style="left:153.70px;top:530px;transform:scaleX(0.8820);">Ordnerrücken</div>
<div class="hd" style="left:128px;top:552px;width:5px"></div>
<div class="bx" style="left:118px;top:548px"><i></i><b></b></div>
<svg style="left:133px;top:544px" width="16" height="16" viewBox="0 0 16 16" shape-rendering="crispEdges"><path d="M1 3h1v-1h5v1h1v1h5v8h-12z" fill="url(#dy)"/><path d="M0.5 13V3.500H1.500V2.500H2.500V1.500H6.500V2.500H7.500V3.500H13.500V12.500H1" fill="none" stroke="#808080"/><path d="M14.500 4v9.500M1 13.500h14" fill="none" stroke="#000"/><path d="M1.500 12V4.500H13" fill="none" stroke="#fff"/></svg>
<div class="t" style="left:153.70px;top:546px;transform:scaleX(0.8760);">Vorlagen</div>
<div class="hd" style="left:128px;top:568px;width:5px"></div>
<div class="bx" style="left:118px;top:564px"><i></i><b></b></div>
<svg style="left:133px;top:560px" width="16" height="16" viewBox="0 0 16 16" shape-rendering="crispEdges"><path d="M1 3h1v-1h5v1h1v1h5v8h-12z" fill="url(#dy)"/><path d="M0.5 13V3.500H1.500V2.500H2.500V1.500H6.500V2.500H7.500V3.500H13.500V12.500H1" fill="none" stroke="#808080"/><path d="M14.500 4v9.500M1 13.500h14" fill="none" stroke="#000"/><path d="M1.500 12V4.500H13" fill="none" stroke="#fff"/></svg>
<div class="t" style="left:153.70px;top:562px;transform:scaleX(0.8964);">Entwicklung</div>
<div class="hd" style="left:109px;top:584px;width:5px"></div>
<div class="bx" style="left:99px;top:580px"><i></i><b></b></div>
<svg style="left:114px;top:576px" width="16" height="16" viewBox="0 0 16 16" shape-rendering="crispEdges"><path d="M1 3h1v-1h5v1h1v1h5v8h-12z" fill="url(#dy)"/><path d="M0.5 13V3.500H1.500V2.500H2.500V1.500H6.500V2.500H7.500V3.500H13.500V12.500H1" fill="none" stroke="#808080"/><path d="M14.500 4v9.500M1 13.500h14" fill="none" stroke="#000"/><path d="M1.500 12V4.500H13" fill="none" stroke="#fff"/></svg>
<div class="t" style="left:134.70px;top:578px;transform:scaleX(0.8964);">Entwicklung</div>
</div>
<div class="a" style="left:352px;top:118px;width:441px;height:1px;background:#808080;"></div>
<div class="a" style="left:352px;top:118px;width:1px;height:611px;background:#808080;"></div>
<div class="a" style="left:353px;top:119px;width:439px;height:1px;background:#000;"></div>
<div class="a" style="left:353px;top:119px;width:1px;height:609px;background:#000;"></div>
<div class="a" style="left:792px;top:118px;width:1px;height:611px;background:#fff;"></div>
<div class="a" style="left:352px;top:728px;width:441px;height:1px;background:#fff;"></div>
<div class="a" style="left:354px;top:120px;width:437px;height:607px;background:#fff;"></div>
<div class="a" style="left:790px;top:120px;width:1px;height:17px;background:#fff;"></div>
<div class="hdr" style="left:354px;top:120px;width:220px;height:17px"></div>
<div class="t" style="left:360.20px;top:123px;transform:scaleX(0.8771);">Dateiname</div>
<div class="hdr" style="left:574px;top:120px;width:62px;height:17px"></div>
<div class="t" style="left:601.30px;top:123px;transform:scaleX(0.8441);">Größe</div>
<div class="hdr" style="left:636px;top:120px;width:57px;height:17px"></div>
<div class="t" style="left:642.90px;top:123px;transform:scaleX(0.9150);">Typ</div>
<div class="hdr" style="left:693px;top:120px;width:97px;height:17px"></div>
<div class="t" style="left:699.80px;top:123px;transform:scaleX(0.8869);">Geändert am</div>
<svg style="left:356px;top:139px" width="16" height="16" viewBox="0 0 16 16" shape-rendering="crispEdges"><path d="M1 3h1v-1h5v1h1v1h5v8h-12z" fill="url(#dy)"/><path d="M0.5 13V3.500H1.500V2.500H2.500V1.500H6.500V2.500H7.500V3.500H13.500V12.500H1" fill="none" stroke="#808080"/><path d="M14.500 4v9.500M1 13.500h14" fill="none" stroke="#000"/><path d="M1.500 12V4.500H13" fill="none" stroke="#fff"/></svg>
<div class="t" style="left:374.80px;top:142px;transform:scaleX(0.8224);">Cvs</div>
<div class="t" style="left:642.60px;top:142px;transform:scaleX(0.8768);">Dateior...</div>
<div class="t" style="left:700.60px;top:142px;transform:scaleX(0.9061);">26.11.2001 23:17</div>
<svg style="left:356px;top:156px" width="16" height="16" viewBox="0 0 16 16" shape-rendering="crispEdges"><path d="M1 3h1v-1h5v1h1v1h5v8h-12z" fill="url(#dy)"/><path d="M0.5 13V3.500H1.500V2.500H2.500V1.500H6.500V2.500H7.500V3.500H13.500V12.500H1" fill="none" stroke="#808080"/><path d="M14.500 4v9.500M1 13.500h14" fill="none" stroke="#000"/><path d="M1.500 12V4.500H13" fill="none" stroke="#fff"/></svg>
<div class="t" style="left:374.80px;top:159px;transform:scaleX(0.8918);">Entwicklung</div>
<div class="t" style="left:642.60px;top:159px;transform:scaleX(0.8768);">Dateior...</div>
<div class="t" style="left:700.60px;top:159px;transform:scaleX(0.9061);">26.11.2001 23:17</div>
<svg style="left:356px;top:173px" width="16" height="16" viewBox="0 0 16 16" shape-rendering="crispEdges"><path d="M1 3h1v-1h5v1h1v1h5v8h-12z" fill="url(#dy)"/><path d="M0.5 13V3.500H1.500V2.500H2.500V1.500H6.500V2.500H7.500V3.500H13.500V12.500H1" fill="none" stroke="#808080"/><path d="M14.500 4v9.500M1 13.500h14" fill="none" stroke="#000"/><path d="M1.500 12V4.500H13" fill="none" stroke="#fff"/></svg>
<div class="t" style="left:374.80px;top:176px;transform:scaleX(0.8656);">Ldap</div>
<div class="t" style="left:642.60px;top:176px;transform:scaleX(0.8768);">Dateior...</div>
<div class="t" style="left:700.60px;top:176px;transform:scaleX(0.9061);">26.11.2001 23:17</div>
<svg style="left:356px;top:190px" width="16" height="16" viewBox="0 0 16 16" shape-rendering="crispEdges"><path d="M1 3h1v-1h5v1h1v1h5v8h-12z" fill="url(#dy)"/><path d="M0.5 13V3.500H1.500V2.500H2.500V1.500H6.500V2.500H7.500V3.500H13.500V12.500H1" fill="none" stroke="#808080"/><path d="M14.500 4v9.500M1 13.500h14" fill="none" stroke="#000"/><path d="M1.500 12V4.500H13" fill="none" stroke="#fff"/></svg>
<div class="t" style="left:374.80px;top:193px;transform:scaleX(0.8622);">Mail-Entwuerfe</div>
<div class="t" style="left:642.60px;top:193px;transform:scaleX(0.8768);">Dateior...</div>
<div class="t" style="left:700.60px;top:193px;transform:scaleX(0.9061);">26.11.2001 23:17</div>
<svg style="left:356px;top:207px" width="16" height="16" viewBox="0 0 16 16" shape-rendering="crispEdges"><path d="M1 3h1v-1h5v1h1v1h5v8h-12z" fill="url(#dy)"/><path d="M0.5 13V3.500H1.500V2.500H2.500V1.500H6.500V2.500H7.500V3.500H13.500V12.500H1" fill="none" stroke="#808080"/><path d="M14.500 4v9.500M1 13.500h14" fill="none" stroke="#000"/><path d="M1.500 12V4.500H13" fill="none" stroke="#fff"/></svg>
<div class="t" style="left:374.80px;top:210px;transform:scaleX(0.8738);">Ordnerrücken</div>
<div class="t" style="left:642.60px;top:210px;transform:scaleX(0.8768);">Dateior...</div>
<div class="t" style="left:700.60px;top:210px;transform:scaleX(0.9061);">26.11.2001 23:17</div>
<svg style="left:356px;top:224px" width="16" height="16" viewBox="0 0 16 16" shape-rendering="crispEdges"><path d="M1 3h1v-1h5v1h1v1h5v8h-12z" fill="url(#dy)"/><path d="M0.5 13V3.500H1.500V2.500H2.500V1.500H6.500V2.500H7.500V3.500H13.500V12.500H1" fill="none" stroke="#808080"/><path d="M14.500 4v9.500M1 13.500h14" fill="none" stroke="#000"/><path d="M1.500 12V4.500H13" fill="none" stroke="#fff"/></svg>
<div class="t" style="left:374.80px;top:227px;transform:scaleX(0.8697);">Vorlagen</div>
<div class="t" style="left:642.60px;top:227px;transform:scaleX(0.8768);">Dateior...</div>
<div class="t" style="left:700.60px;top:227px;transform:scaleX(0.9061);">26.11.2001 23:17</div>
<svg style="left:356px;top:241px" width="16" height="16" viewBox="0 0 16 16" shape-rendering="crispEdges"><path d="M3.500 0.500h9l3 3v11h-12z" fill="#fff"/><path d="M3.500 15v-14.500h9" stroke="#808080" fill="none"/><path d="M12.500 1v3h3M15.500 4v10.500h-12" stroke="#000" fill="none"/><path d="M12.500 0.500l3 3" stroke="#000" fill="none" shape-rendering="auto"/><path d="M10.500 5.500h3M10.500 7.500h3M10.500 9.500h3M6 12.500h7" stroke="#c0c0c0" fill="none"/><rect x="0.500" y="2.500" width="9" height="9" fill="#fff" stroke="#ff0000"/><rect x="0.500" y="2.500" width="9" height="9" fill="none" stroke="#808000" stroke-dasharray="1 1"/><circle cx="5" cy="7" r="2.800" fill="#e83000" shape-rendering="auto"/><path d="M5.300 6.700V3.800A2.900 2.900 0 0 1 8.200 6.700z" fill="#fff" shape-rendering="auto"/><circle cx="4.300" cy="7.500" r="1.100" fill="#fff" shape-rendering="auto"/></svg>
<div class="t" style="left:374.80px;top:244px;transform:scaleX(0.8745);">Admin-Aufgaben-Struktur.ppt</div>
<div class="t" style="left:601.60px;top:244px;transform:scaleX(0.8509);">53 KB</div>
<div class="t" style="left:642.60px;top:244px;transform:scaleX(0.8635);">Microso...</div>
<div class="t" style="left:700.60px;top:244px;transform:scaleX(0.9061);">26.11.2001 23:17</div>
<svg style="left:356px;top:258px" width="16" height="16" viewBox="0 0 16 16" shape-rendering="crispEdges"><path d="M3.500 0.500h9l3 3v11h-12z" fill="#fff"/><path d="M3.500 15v-14.500h9" stroke="#808080" fill="none"/><path d="M12.500 1v3h3M15.500 4v10.500h-12" stroke="#000" fill="none"/><path d="M12.500 0.500l3 3" stroke="#000" fill="none" shape-rendering="auto"/><path d="M10.500 5.500h3M10.500 7.500h3M10.500 9.500h3M6 12.500h7" stroke="#c0c0c0" fill="none"/><rect x="0.500" y="2.500" width="9" height="9" fill="#fff" stroke="#0000ff"/><rect x="0.500" y="2.500" width="9" height="9" fill="none" stroke="#000080" stroke-dasharray="1 1"/><path d="M1 3.500h8" stroke="#0000c0" fill="none"/><path d="M2 5l1.500 5l1.500-4l1.500 4l1.500-5" stroke="#000040" stroke-width="1.500" fill="none" shape-rendering="auto"/></svg>
<div class="t" style="left:374.80px;top:261px;transform:scaleX(0.8648);">Adressenliste.doc</div>
<div class="t" style="left:586.60px;top:261px;transform:scaleX(0.8674);">6.014 KB</div>
<div class="t" style="left:642.60px;top:261px;transform:scaleX(0.8635);">Microso...</div>
<div class="t" style="left:700.60px;top:261px;transform:scaleX(0.9061);">26.11.2001 23:17</div>
<svg style="left:356px;top:275px" width="16" height="16" viewBox="0 0 16 16" shape-rendering="crispEdges"><path d="M3.500 0.500h9l3 3v11h-12z" fill="#fff"/><path d="M3.500 15v-14.500h9" stroke="#808080" fill="none"/><path d="M12.500 1v3h3M15.500 4v10.500h-12" stroke="#000" fill="none"/><path d="M12.500 0.500l3 3" stroke="#000" fill="none" shape-rendering="auto"/><path d="M10.500 6.500h3M10.500 8.500h3M10.500 10.500h3M9 12.500h4" stroke="#c0c0c0" fill="none"/><path d="M1 3l8.500 9M9.500 3l-8.500 9" stroke="#006800" stroke-width="3" fill="none" shape-rendering="auto"/><path d="M1 3l8.500 9M9.500 3l-8.500 9" stroke="#40a040" stroke-width="1" stroke-dasharray="1 1" fill="none" shape-rendering="auto"/></svg>
<div class="t" style="left:374.80px;top:278px;transform:scaleX(0.8587);">Anschlussplan.xls</div>
<div class="t" style="left:601.60px;top:278px;transform:scaleX(0.8509);">31 KB</div>
<div class="t" style="left:642.60px;top:278px;transform:scaleX(0.8635);">Microso...</div>
<div class="t" style="left:700.60px;top:278px;transform:scaleX(0.9061);">26.11.2001 23:17</div>
<svg style="left:356px;top:292px" width="16" height="16" viewBox="0 0 16 16" shape-rendering="crispEdges"><path d="M3.500 0.500h9l3 3v11h-12z" fill="#fff"/><path d="M3.500 15v-14.500h9" stroke="#808080" fill="none"/><path d="M12.500 1v3h3M15.500 4v10.500h-12" stroke="#000" fill="none"/><path d="M12.500 0.500l3 3" stroke="#000" fill="none" shape-rendering="auto"/><path d="M10.500 6.500h3M10.500 8.500h3M10.500 10.500h3M9 12.500h4" stroke="#c0c0c0" fill="none"/><path d="M1 3l8.500 9M9.500 3l-8.500 9" stroke="#006800" stroke-width="3" fill="none" shape-rendering="auto"/><path d="M1 3l8.500 9M9.500 3l-8.500 9" stroke="#40a040" stroke-width="1" stroke-dasharray="1 1" fill="none" shape-rendering="auto"/></svg>
<div class="t" style="left:374.80px;top:295px;transform:scaleX(0.8649);">F2954000.xls</div>
<div class="t" style="left:595.60px;top:295px;transform:scaleX(0.8591);">639 KB</div>
<div class="t" style="left:642.60px;top:295px;transform:scaleX(0.8635);">Microso...</div>
<div class="t" style="left:700.60px;top:295px;transform:scaleX(0.9061);">26.11.2001 23:17</div>
<svg style="left:356px;top:309px" width="16" height="16" viewBox="0 0 16 16" shape-rendering="crispEdges"><path d="M3.500 0.500h9l3 3v11h-12z" fill="#fff"/><path d="M3.500 15v-14.500h9" stroke="#808080" fill="none"/><path d="M12.500 1v3h3M15.500 4v10.500h-12" stroke="#000" fill="none"/><path d="M12.500 0.500l3 3" stroke="#000" fill="none" shape-rendering="auto"/><path d="M10.500 6.500h3M10.500 8.500h3M10.500 10.500h3M9 12.500h4" stroke="#c0c0c0" fill="none"/><path d="M1 3l8.500 9M9.500 3l-8.500 9" stroke="#006800" stroke-width="3" fill="none" shape-rendering="auto"/><path d="M1 3l8.500 9M9.500 3l-8.500 9" stroke="#40a040" stroke-width="1" stroke-dasharray="1 1" fill="none" shape-rendering="auto"/></svg>
<div class="t" style="left:374.80px;top:312px;transform:scaleX(0.8494);">Filer-Test.xls</div>
<div class="t" style="left:601.60px;top:312px;transform:scaleX(0.8509);">18 KB</div>
<div class="t" style="left:642.60px;top:312px;transform:scaleX(0.8635);">Microso...</div>
<div class="t" style="left:700.60px;top:312px;transform:scaleX(0.9061);">26.11.2001 23:17</div>
<svg style="left:356px;top:326px" width="16" height="16" viewBox="0 0 16 16" shape-rendering="crispEdges"><path d="M2.500 1.500h9l3 3v10h-12z" fill="#fff"/><path d="M2.500 15v-13.500h9" stroke="#808080" fill="none"/><path d="M11.500 2v3h3M14.500 5v9.500h-12" stroke="#000" fill="none"/><path d="M11.500 1.500l3 3" stroke="#000" fill="none" shape-rendering="auto"/><rect x="4" y="5" width="3" height="3" fill="#00e800"/><rect x="4" y="9" width="3" height="3" fill="#00e800"/><rect x="8" y="5" width="3" height="3" fill="#00e800"/><rect x="8" y="9" width="3" height="3" fill="#00e800"/></svg>
<div class="t" style="left:374.80px;top:329px;transform:scaleX(0.8618);">Firewall.vsd</div>
<div class="t" style="left:595.60px;top:329px;transform:scaleX(0.8591);">231 KB</div>
<div class="t" style="left:642.60px;top:329px;transform:scaleX(0.8560);">Visio 20...</div>
<div class="t" style="left:700.60px;top:329px;transform:scaleX(0.9061);">26.11.2001 23:17</div>
<svg style="left:356px;top:343px" width="16" height="16" viewBox="0 0 16 16" shape-rendering="crispEdges"><path d="M3.500 0.500h9l3 3v11h-12z" fill="#fff"/><path d="M3.500 15v-14.500h9" stroke="#808080" fill="none"/><path d="M12.500 1v3h3M15.500 4v10.500h-12" stroke="#000" fill="none"/><path d="M12.500 0.500l3 3" stroke="#000" fill="none" shape-rendering="auto"/><path d="M10.500 6.500h3M10.500 8.500h3M10.500 10.500h3M9 12.500h4" stroke="#c0c0c0" fill="none"/><path d="M1 3l8.500 9M9.500 3l-8.500 9" stroke="#006800" stroke-width="3" fill="none" shape-rendering="auto"/><path d="M1 3l8.500 9M9.500 3l-8.500 9" stroke="#40a040" stroke-width="1" stroke-dasharray="1 1" fill="none" shape-rendering="auto"/></svg>
<div class="t" style="left:374.80px;top:346px;transform:scaleX(0.8566);">Lizenz-Aufstellung.xls</div>
<div class="t" style="left:601.60px;top:346px;transform:scaleX(0.8509);">25 KB</div>
<div class="t" style="left:642.60px;top:346px;transform:scaleX(0.8635);">Microso...</div>
<div class="t" style="left:700.60px;top:346px;transform:scaleX(0.9061);">26.11.2001 23:17</div>
<svg style="left:356px;top:360px" width="16" height="16" viewBox="0 0 16 16" shape-rendering="crispEdges"><path d="M3.500 0.500h9l3 3v11h-12z" fill="#fff"/><path d="M3.500 15v-14.500h9" stroke="#808080" fill="none"/><path d="M12.500 1v3h3M15.500 4v10.500h-12" stroke="#000" fill="none"/><path d="M12.500 0.500l3 3" stroke="#000" fill="none" shape-rendering="auto"/><path d="M10.500 5.500h3M10.500 7.500h3M10.500 9.500h3M6 12.500h7" stroke="#c0c0c0" fill="none"/><rect x="0.500" y="2.500" width="9" height="9" fill="#fff" stroke="#ff0000"/><rect x="0.500" y="2.500" width="9" height="9" fill="none" stroke="#808000" stroke-dasharray="1 1"/><circle cx="5" cy="7" r="2.800" fill="#e83000" shape-rendering="auto"/><path d="M5.300 6.700V3.800A2.900 2.900 0 0 1 8.200 6.700z" fill="#fff" shape-rendering="auto"/><circle cx="4.300" cy="7.500" r="1.100" fill="#fff" shape-rendering="auto"/></svg>
<div class="t" style="left:374.80px;top:363px;transform:scaleX(0.8982);">MRTG.ppt</div>
<div class="t" style="left:601.60px;top:363px;transform:scaleX(0.8509);">91 KB</div>
<div class="t" style="left:642.60px;top:363px;transform:scaleX(0.8635);">Microso...</div>
<div class="t" style="left:700.60px;top:363px;transform:scaleX(0.9061);">26.11.2001 23:17</div>
<svg style="left:356px;top:377px" width="16" height="16" viewBox="0 0 16 16" shape-rendering="crispEdges"><path d="M3.500 0.500h9l3 3v11h-12z" fill="#fff"/><path d="M3.500 15v-14.500h9" stroke="#808080" fill="none"/><path d="M12.500 1v3h3M15.500 4v10.500h-12" stroke="#000" fill="none"/><path d="M12.500 0.500l3 3" stroke="#000" fill="none" shape-rendering="auto"/><path d="M10.500 5.500h3M10.500 7.500h3M10.500 9.500h3M6 12.500h7" stroke="#c0c0c0" fill="none"/><rect x="0.500" y="2.500" width="9" height="9" fill="#fff" stroke="#0000ff"/><rect x="0.500" y="2.500" width="9" height="9" fill="none" stroke="#000080" stroke-dasharray="1 1"/><path d="M1 3.500h8" stroke="#0000c0" fill="none"/><path d="M2 5l1.500 5l1.500-4l1.500 4l1.500-5" stroke="#000040" stroke-width="1.500" fill="none" shape-rendering="auto"/></svg>
<div class="t" style="left:374.80px;top:380px;transform:scaleX(0.8722);">Server-Ausfstellung.doc</div>
<div class="t" style="left:601.60px;top:380px;transform:scaleX(0.8509);">45 KB</div>
<div class="t" style="left:642.60px;top:380px;transform:scaleX(0.8635);">Microso...</div>
<div class="t" style="left:700.60px;top:380px;transform:scaleX(0.9061);">26.11.2001 23:17</div>
<svg style="left:356px;top:394px" width="16" height="16" viewBox="0 0 16 16" shape-rendering="crispEdges"><path d="M3.500 0.500h9l3 3v11h-12z" fill="#fff"/><path d="M3.500 15v-14.500h9" stroke="#808080" fill="none"/><path d="M12.500 1v3h3M15.500 4v10.500h-12" stroke="#000" fill="none"/><path d="M12.500 0.500l3 3" stroke="#000" fill="none" shape-rendering="auto"/><path d="M10.500 5.500h3M10.500 7.500h3M10.500 9.500h3M6 12.500h7" stroke="#c0c0c0" fill="none"/><rect x="0.500" y="2.500" width="9" height="9" fill="#fff" stroke="#0000ff"/><rect x="0.500" y="2.500" width="9" height="9" fill="none" stroke="#000080" stroke-dasharray="1 1"/><path d="M1 3.500h8" stroke="#0000c0" fill="none"/><path d="M2 5l1.500 5l1.500-4l1.500 4l1.500-5" stroke="#000040" stroke-width="1.500" fill="none" shape-rendering="auto"/></svg>
<div class="t" style="left:374.80px;top:397px;transform:scaleX(0.8881);">Sessionkopplung.doc</div>
<div class="t" style="left:601.60px;top:397px;transform:scaleX(0.8509);">31 KB</div>
<div class="t" style="left:642.60px;top:397px;transform:scaleX(0.8635);">Microso...</div>
<div class="t" style="left:700.60px;top:397px;transform:scaleX(0.9061);">26.11.2001 23:17</div>
<svg style="left:356px;top:411px" width="16" height="16" viewBox="0 0 16 16" shape-rendering="crispEdges"><path d="M3.500 0.500h9l3 3v11h-12z" fill="#fff"/><path d="M3.500 15v-14.500h9" stroke="#808080" fill="none"/><path d="M12.500 1v3h3M15.500 4v10.500h-12" stroke="#000" fill="none"/><path d="M12.500 0.500l3 3" stroke="#000" fill="none" shape-rendering="auto"/><path d="M10.500 5.500h3M10.500 7.500h3M10.500 9.500h3M6 12.500h7" stroke="#c0c0c0" fill="none"/><rect x="0.500" y="2.500" width="9" height="9" fill="#fff" stroke="#0000ff"/><rect x="0.500" y="2.500" width="9" height="9" fill="none" stroke="#000080" stroke-dasharray="1 1"/><path d="M1 3.500h8" stroke="#0000c0" fill="none"/><path d="M2 5l1.500 5l1.500-4l1.500 4l1.500-5" stroke="#000040" stroke-width="1.500" fill="none" shape-rendering="auto"/></svg>
<div class="t" style="left:374.80px;top:414px;transform:scaleX(0.8787);">SingleSignOn.doc</div>
<div class="t" style="left:601.60px;top:414px;transform:scaleX(0.8509);">74 KB</div>
<div class="t" style="left:642.60px;top:414px;transform:scaleX(0.8635);">Microso...</div>
<div class="t" style="left:700.60px;top:414px;transform:scaleX(0.9061);">26.11.2001 23:17</div>
<svg style="left:356px;top:428px" width="16" height="16" viewBox="0 0 16 16" shape-rendering="crispEdges"><path d="M3.500 0.500h9l3 3v11h-12z" fill="#fff"/><path d="M3.500 15v-14.500h9" stroke="#808080" fill="none"/><path d="M12.500 1v3h3M15.500 4v10.500h-12" stroke="#000" fill="none"/><path d="M12.500 0.500l3 3" stroke="#000" fill="none" shape-rendering="auto"/><path d="M10.500 6.500h3M10.500 8.500h3M10.500 10.500h3M9 12.500h4" stroke="#c0c0c0" fill="none"/><path d="M1 3l8.500 9M9.500 3l-8.500 9" stroke="#006800" stroke-width="3" fill="none" shape-rendering="auto"/><path d="M1 3l8.500 9M9.500 3l-8.500 9" stroke="#40a040" stroke-width="1" stroke-dasharray="1 1" fill="none" shape-rendering="auto"/></svg>
<div class="t" style="left:374.80px;top:431px;transform:scaleX(0.8684);">Software-Fragebogen.xls</div>
<div class="t" style="left:601.60px;top:431px;transform:scaleX(0.8509);">16 KB</div>
<div class="t" style="left:642.60px;top:431px;transform:scaleX(0.8635);">Microso...</div>
<div class="t" style="left:700.60px;top:431px;transform:scaleX(0.9061);">26.11.2001 23:17</div>
<svg style="left:356px;top:445px" width="16" height="16" viewBox="0 0 16 16" shape-rendering="crispEdges"><path d="M3.500 0.500h9l3 3v11h-12z" fill="#fff"/><path d="M3.500 15v-14.500h9" stroke="#808080" fill="none"/><path d="M12.500 1v3h3M15.500 4v10.500h-12" stroke="#000" fill="none"/><path d="M12.500 0.500l3 3" stroke="#000" fill="none" shape-rendering="auto"/><path d="M10.500 5.500h3M10.500 7.500h3M10.500 9.500h3M6 12.500h7" stroke="#c0c0c0" fill="none"/><rect x="0.500" y="2.500" width="9" height="9" fill="#fff" stroke="#0000ff"/><rect x="0.500" y="2.500" width="9" height="9" fill="none" stroke="#000080" stroke-dasharray="1 1"/><path d="M1 3.500h8" stroke="#0000c0" fill="none"/><path d="M2 5l1.500 5l1.500-4l1.500 4l1.500-5" stroke="#000040" stroke-width="1.500" fill="none" shape-rendering="auto"/></svg>
<div class="t" style="left:374.80px;top:448px;transform:scaleX(0.8902);">Stoerungs-Logbuch.doc</div>
<div class="t" style="left:601.60px;top:448px;transform:scaleX(0.8509);">20 KB</div>
<div class="t" style="left:642.60px;top:448px;transform:scaleX(0.8635);">Microso...</div>
<div class="t" style="left:700.60px;top:448px;transform:scaleX(0.9061);">26.11.2001 23:17</div>
<div class="a" style="left:372px;top:139px;width:26px;height:17px;border:1px dotted #000"></div>
<div class="a sb" style="left:354px;top:711px;width:437px;height:16px"></div>
<div class="btn" style="left:354px;top:711px;width:16px;height:16px"></div>
<svg style="left:359px;top:715px" width="4" height="7" viewBox="0 0 4 7" shape-rendering="crispEdges"><path d="M3 0h1v7h-1v-1h-1v-1h-1v-1h-1v-1h1v-1h1v-1h1z" fill="#000"/></svg>
<div class="btn" style="left:775px;top:711px;width:16px;height:16px"></div>
<svg style="left:781px;top:715px" width="4" height="7" viewBox="0 0 4 7" shape-rendering="crispEdges"><path d="M0 0h1v1h1v1h1v1h1v1h-1v1h-1v1h-1v1h-1z" fill="#000"/></svg>
<div class="btn" style="left:370px;top:711px;width:357px;height:16px"></div>
<div class="sunk" style="left:4px;top:731px;width:240px;height:18px"></div>
<div class="sunk" style="left:246px;top:731px;width:327px;height:18px"></div>
<div class="sunk" style="left:575px;top:731px;width:218px;height:18px"></div>
<div class="t" style="left:7.00px;top:734px;transform:scaleX(0.8710);">19 Objekt(e)</div>
<div class="t" style="left:249.00px;top:734px;transform:scaleX(0.8786);">7,11 MB (Freier Speicher: 5,45 GB)</div>
<div class="t" style="left:597.50px;top:734px;transform:scaleX(0.8845);">Lokales Intranet</div>
<svg style="left:577px;top:731px" width="17" height="17" viewBox="0 0 17 17" shape-rendering="crispEdges"><rect x="1" y="1" width="7" height="7" fill="#e0e0e0"/><path d="M1.500 8v-6.500h6" fill="none" stroke="#fff"/><path d="M8.500 1v7.500h-7.500" fill="none" stroke="#606060"/><rect x="2" y="2" width="5" height="4" fill="#2828e8"/><rect x="3" y="3" width="2" height="1" fill="#8080ff"/><rect x="1" y="9" width="6" height="3" fill="#e8e8e8"/><path d="M1 12.500h6" stroke="#404040" fill="none"/><rect x="2" y="10" width="2" height="1" fill="#00a000"/><rect x="2" y="13" width="2" height="2" fill="#e0b000"/><path d="M1 14.500h5" stroke="#000" fill="none"/><rect x="6" y="4" width="9" height="8" fill="#e0e0e0"/><path d="M6.500 12v-7.500h8" fill="none" stroke="#fff"/><path d="M15.500 4v8.500h-9.500" fill="none" stroke="#303030"/><path d="M5.500 5v7" fill="none" stroke="#808080"/><rect x="7" y="6" width="6" height="4" fill="#009898"/><rect x="8" y="7" width="3" height="1" fill="#40d0d0"/><rect x="6" y="13" width="10" height="3" fill="#f0f0f0"/><path d="M6 16.500h11M16.500 13v4" stroke="#000" fill="none"/><path d="M6 12.500h10" stroke="#808080" fill="none"/><rect x="7" y="14" width="2" height="1" fill="#00a000"/></svg>
<div class="a" style="left:780px;top:748px;width:13px;height:1px;background:#c0c0c0;"></div>
<div class="a" style="left:792px;top:736px;width:1px;height:13px;background:#c0c0c0;"></div>
<svg style="left:780px;top:736px" width="13" height="13" viewBox="0 0 13 13"><path d="M13 0l-13 13M13 4l-9 9M13 8l-5 5" stroke="#fff" stroke-width="1.200"/><path d="M13 1.400l-11.600 11.600M13 2.400l-10.600 10.600M13 5.400l-7.600 7.600M13 6.400l-6.600 6.600M13 9.400l-3.600 3.600M13 10.400l-2.600 2.600" stroke="#808080" stroke-width="1"/></svg>
</body></html>
